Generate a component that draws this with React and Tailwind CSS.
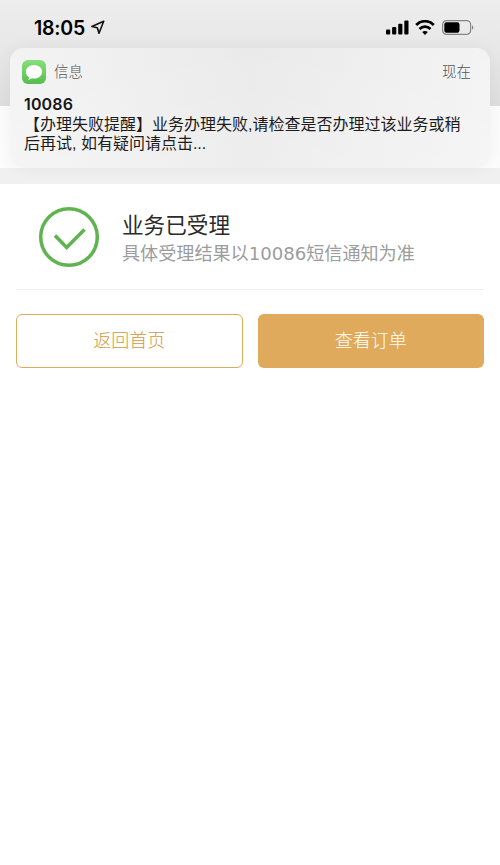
import React from 'react';

const BARS = [
  { x: 0, h: 5 },
  { x: 6.1, h: 7.5 },
  { x: 12.2, h: 10.8 },
  { x: 18.3, h: 14.2 },
];

const StatusBar = () => (
  <div className="flex h-12 items-start justify-between pl-[34px] pr-[25px] pt-[15px]">
    <div className="flex items-center">
      <span className="w-[53px] whitespace-nowrap pt-px font-['Inter'] text-[19.5px] font-semibold leading-6 tracking-[-0.2px] text-black">18:05</span>
      <svg className="ml-1 h-[15px] w-[14px]" viewBox="0 0 14 15" fill="none" stroke="#111" strokeWidth="1.6" strokeLinejoin="round">
        <path d="M12.7 1.2.9 6.5 6.3 7.7 8 13.2Z" />
      </svg>
    </div>
    <div className="flex h-6 items-center">
      <svg className="h-[15px] w-[23px]" viewBox="0 0 23 15" fill="#000">
        {BARS.map(b => (
          <rect key={b.x} x={b.x} y={14.6 - b.h} width="4.2" height={b.h} rx="1" />
        ))}
      </svg>
      <svg className="ml-[6px] h-[15px] w-5" viewBox="0 0 20 15" fill="none" stroke="#000" strokeWidth="2.7">
        <path d="M1.2 5C6.2 -.1 13.8 -.1 18.800 5" />
        <path d="M4.5 9C7.7 5.9 12.3 5.9 15.5 9" />
        <path d="M10 14.9 7.2 12.1C8.9 10.5 11.1 10.5 12.8 12.1Z" fill="#000" stroke="none" />
      </svg>
      <svg className="ml-[7px] mr-px h-[15px] w-8" viewBox="0 0 32 15">
        <rect x=".6" y=".6" width="28" height="13.8" rx="4" fill="none" stroke="#858585" strokeWidth="1.2" />
        <rect x="2.3" y="2.3" width="15.2" height="10.4" rx="2.2" fill="#000" />
        <path d="M30 5.2C31.8 6 31.8 9 30 9.8Z" fill="#858585" />
      </svg>
    </div>
  </div>
);

const Notification = () => (
  <div className="relative mx-[10px] h-[120px] rounded-[14px] bg-linear-to-r from-[#f2f2f2] via-[#e8e8e8] to-[#f2f2f2] shadow-[0_0_16px_rgba(0,0,0,0.05)]">
    <div className="h-full rounded-[14px] bg-linear-to-b from-white/10 to-white/25 pl-[14px] pr-[19px] pt-3">
      <div className="flex h-6 items-center">
        <div className="-ml-[2px] flex h-6 w-6 items-center justify-center rounded-[6px] bg-linear-to-b from-[#87df7b] to-[#54bd4d]">
          <svg className="h-[17px] w-[18px]" viewBox="0 0 18 17" fill="#fff">
            <path d="M9 1C4.4 1 .8 4 .8 7.8c0 2.4 1.4 4.4 3.5 5.6-.2 1-.7 1.8-1.3 2.4 1.5-.1 2.8-.7 3.8-1.5 .7.2 1.4.3 2.2.3 4.6 0 8.2-3 8.2-6.8S13.6 1 9 1Z" />
          </svg>
        </div>
        <span className="ml-2 pt-0.5 text-[14.5px] font-light text-[#555]">信息</span>
        <span className="ml-auto pt-0.5 text-[14.5px] font-light text-[#555]">现在</span>
      </div>
      <div className="mb-px mt-[10px] font-['Inter'] text-[16px] font-semibold leading-5 tracking-[0.15px] text-[#151515]">10086</div>
      <div className="whitespace-nowrap text-base leading-[19px] text-[#1c1c1c] [text-spacing-trim:space-all]">
        <p>【办理失败提醒】业务办理失败,请检查是否办理过该业务或稍</p>
        <p>后再试, 如有疑问请点击...</p>
      </div>
    </div>
  </div>
);

const Result = () => (
  <div className="mx-4 flex h-[106px] items-start border-b border-[#efefef] pl-[22px] pt-[22px]">
    <svg className="h-[62px] w-[62px] shrink-0" viewBox="0 0 62 62" fill="none" stroke="#60b44f">
      <circle cx="31" cy="31" r="28.3" strokeWidth="3.5" />
      <path d="M17 29.5 28.7 41.5 46.5 23.5" strokeWidth="3.6" />
    </svg>
    <div className="ml-[22px] pt-[5px]">
      <h1 className="text-[21.6px] leading-[30px] text-[#2b2b2b]">业务已受理</h1>
      <p className="font-['DejaVu_Sans','Noto_Sans_CJK_SC',sans-serif] text-[18.1px] leading-[26px] text-[#9c9c9c]">具体受理结果以10086短信通知为准</p>
    </div>
  </div>
);

const App = () => (
  <div className="min-h-screen bg-white font-['Liberation_Sans','Noto_Sans_CJK_SC',sans-serif]">
    <header className="h-[184px] bg-[linear-gradient(to_bottom,#ededed_0,#e8e8e8_48px,#dedede_106px,#fcfcfc_106px,#fcfcfc_168px,#f0f0f0_168px,#f0f0f0_184px)]">
      <StatusBar />
      <Notification />
    </header>
    <main>
      <Result />
      <div className="mx-4 mt-[23.5px] grid grid-cols-2 gap-[15px]">
        <button className="h-[54.5px] rounded-[6px] border-[1.5px] border-[#dfaa5b] pt-px text-[18px] font-light text-[#d29740]">返回首页</button>
        <button className="h-[54.5px] rounded-[6px] bg-[#dfaa5b] pt-px text-[18px] font-light text-white">查看订单</button>
      </div>
    </main>
  </div>
);

export default App;
